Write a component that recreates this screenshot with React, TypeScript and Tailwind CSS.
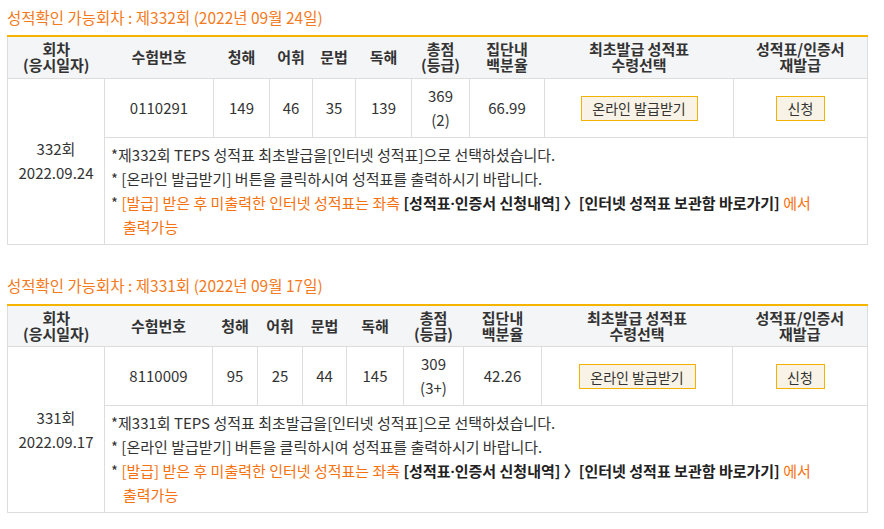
import React from "react";

type Row = {
  round: string;
  date: string;
  titleRound: string;
  titleDate: string;
  id: string;
  l: string;
  v: string;
  g: string;
  r: string;
  total: string;
  grade: string;
  pct: string;
  widths: string[];
};

const rows: Row[] = [
  {
    round: "332회",
    date: "2022.09.24",
    titleRound: "제332회",
    titleDate: "(2022년 09월 24일)",
    id: "0110291",
    l: "149",
    v: "46",
    g: "35",
    r: "139",
    total: "369",
    grade: "(2)",
    pct: "66.99",
    widths: ["w-[97px]", "w-[109px]", "w-[56px]", "w-[43px]", "w-[43px]", "w-[56px]", "w-[58px]", "w-[75px]", "w-[189px]", "w-[134px]"],
  },
  {
    round: "331회",
    date: "2022.09.17",
    titleRound: "제331회",
    titleDate: "(2022년 09월 17일)",
    id: "8110009",
    l: "95",
    v: "25",
    g: "44",
    r: "145",
    total: "309",
    grade: "(3+)",
    pct: "42.26",
    widths: ["w-[97px]", "w-[108px]", "w-[45px]", "w-[45px]", "w-[44px]", "w-[57px]", "w-[60px]", "w-[78px]", "w-[191px]", "w-[135px]"],
  },
];

function Header() {
  const th = "font-bold text-[15px] leading-[16px] text-[#333] text-center align-middle border-b border-[#dddddd] bg-[#f4f5f7] px-0 whitespace-nowrap";
  return (
    <tr className="h-[42px]">
      <th className={th}>회차<br />(응시일자)</th>
      <th className={th}>수험번호</th>
      <th className={th}>청해</th>
      <th className={th}>어휘</th>
      <th className={th}>문법</th>
      <th className={th}>독해</th>
      <th className={th}>총점<br />(등급)</th>
      <th className={th}>집단내<br />백분율</th>
      <th className={th}>최초발급 성적표<br />수령선택</th>
      <th className={th}>성적표/인증서<br />재발급</th>
    </tr>
  );
}

function Section({ row, first }: { row: Row; first: boolean }) {
  const td = "border border-[#dddddd] text-center align-middle text-[15px] leading-[24px] text-[#333] px-0";
  return (
    <section className={first ? "pt-[7px]" : "mt-[30px]"}>
      <h2 className={`ml-[7px] text-[15.5px] leading-[20px] font-normal text-[#f47a20] ${first ? "mb-[8px]" : "mb-[9px]"}`}>
        성적확인 가능회차 : {row.titleRound} {row.titleDate}
      </h2>
      <table className="ml-[7px] w-[860px] table-fixed border-collapse border-x border-x-[#dddddd] border-b border-b-[#dddddd] border-t-2 border-t-[#f5b400]">
        <colgroup>
          {row.widths.map((w, i) => (
            <col key={i} className={w} />
          ))}
        </colgroup>
        <thead>
          <Header />
        </thead>
        <tbody>
          <tr className="h-[59px]">
            <td rowSpan={2} className={td}>
              {row.round}
              <br />
              {row.date}
            </td>
            <td className={td}>{row.id}</td>
            <td className={td}>{row.l}</td>
            <td className={td}>{row.v}</td>
            <td className={td}>{row.g}</td>
            <td className={td}>{row.r}</td>
            <td className={td}>
              {row.total}
              <br />
              {row.grade}
            </td>
            <td className={td}>{row.pct}</td>
            <td className={td}>
              <button className="inline-flex items-center justify-center h-[25px] w-[117px] border border-[#f2b200] bg-[#f8f3e6] text-[14px] text-[#333] align-middle">
                온라인 발급받기
              </button>
            </td>
            <td className={td}>
              <button className="inline-flex items-center justify-center h-[25px] w-[49px] border border-[#f2b200] bg-[#f8f3e6] text-[14px] text-[#333] align-middle">
                신청
              </button>
            </td>
          </tr>
          <tr>
            <td colSpan={9} className="border border-[#dddddd] text-left align-top text-[15px] leading-[24px] text-[#333] pl-[6px] pr-[4px] pt-[5px] pb-[5px]">
              <p className="whitespace-nowrap">*{row.titleRound} TEPS 성적표 최초발급을[인터넷 성적표]으로 선택하셨습니다.</p>
              <p className="whitespace-nowrap">* [온라인 발급받기] 버튼을 클릭하시여 성적표를 출력하시기 바랍니다.</p>
              <p className="pl-[12px] -indent-[12px] whitespace-nowrap">
                * <span className="text-[#f5720f]">[발급] 받은 후 미출력한 인터넷 성적표는 좌측</span>{" "}
                <span className="font-bold text-[#222]">
                  [성적표<span className="font-['Noto_Sans',sans-serif]">·</span>인증서 신청내역] 〉[인터넷 성적표 보관함 바로가기]
                </span>{" "}
                <span className="text-[#f5720f]">
                  에서
                  <br />
                  출력가능
                </span>
              </p>
            </td>
          </tr>
        </tbody>
      </table>
    </section>
  );
}

export default function App() {
  return (
    <div className="w-[884px] h-[529px] bg-white overflow-hidden font-['Noto_Sans_CJK_KR','Noto_Sans',sans-serif]">
      {rows.map((r, i) => (
        <Section key={i} row={r} first={i === 0} />
      ))}
    </div>
  );
}
